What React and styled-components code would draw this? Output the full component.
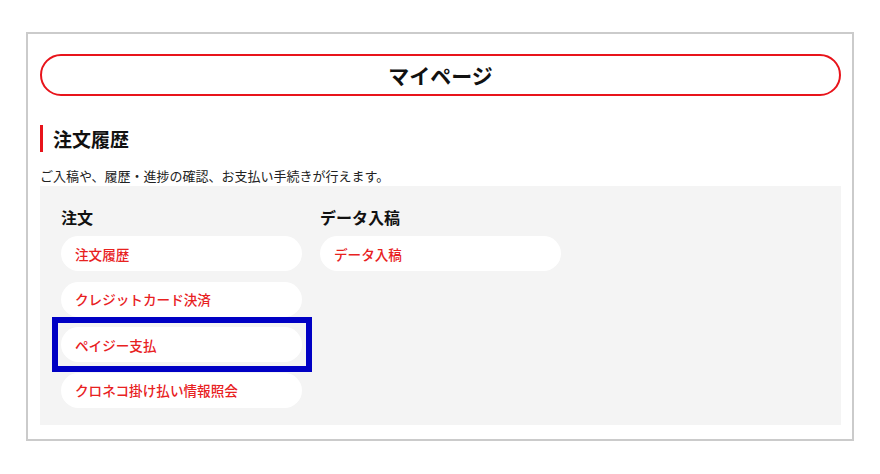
import styled, { createGlobalStyle } from 'styled-components'

const GlobalStyle = createGlobalStyle`
    body {
        margin:0;
        background:#fff;
        font-family:"Noto Sans CJK JP", "Noto Sans", sans-serif;
        color:#222;
    }
`;

const Frame = styled.div`
    margin:32px 0 0 26px;
    width:828px;
    height:409px;
    box-sizing:border-box;
    border:2px solid #cbcbcb;
    padding:20px 11px 0 12px;
`;

const PageTitle = styled.h1`
    margin:0;
    height:42px;
    box-sizing:border-box;
    border:2px solid #e8141b;
    border-radius:21px;
    display:flex;
    align-items:center;
    justify-content:center;
    font-size:21px;
    font-weight:700;
    color:#111;
`;

const SectionHeading = styled.h2`
    margin:29px 0 0 0;
    padding:0 0 0 10px;
    border-left:3px solid #e8141b;
    height:27px;
    display:flex;
    align-items:center;
    font-size:19px;
    font-weight:700;
    color:#111;
`;

const Lead = styled.p`
    margin:13px 0 0 0;
    font-size:13px;
    line-height:21px;
    color:#222;
`;

const Panel = styled.div`
    background:#f4f4f4;
    height:239px;
    box-sizing:border-box;
    padding:20px 21px 0;
    display:flex;
    gap:18px;
`;

const Column = styled.div`
    width:241px;
    display:flex;
    flex-direction:column;
`;

const ColumnTitle = styled.h3`
    margin:0 0 7px 0;
    font-size:16px;
    line-height:23px;
    font-weight:700;
    color:#111;
`;

const LinkList = styled.ul`
    list-style:none;
    margin:0;
    padding:0;
    display:flex;
    flex-direction:column;
    gap:10.5px;
`;

const LinkItem = styled.li`
    position:relative;
    ${p => p.$marked && `
        &::after {
            content:"";
            position:absolute;
            left:-9px;
            right:-10px;
            top:-10.5px;
            bottom:-10px;
            border:6px solid #0000c4;
            pointer-events:none;
        }
    `}
`;

const LinkPill = styled.a`
    display:flex;
    align-items:center;
    height:35px;
    padding:0 14px;
    border-radius:18px;
    background:#fff;
    color:#e8221f;
    font-size:13.6px;
    font-weight:500;
    text-decoration:none;
`;

const menus = [
    { title: '注文', links: ['注文履歴', 'クレジットカード決済', 'ペイジー支払', 'クロネコ掛け払い情報照会'] },
    { title: 'データ入稿', links: ['データ入稿'] },
];

const App = () => {
    return (
        <>
            <GlobalStyle/>
            <Frame>
                <PageTitle>マイページ</PageTitle>
                <SectionHeading>注文履歴</SectionHeading>
                <Lead>ご入稿や、履歴・進捗の確認、お支払い手続きが行えます。</Lead>
                <Panel>
                    {menus.map(menu => (
                        <Column key={menu.title}>
                            <ColumnTitle>{menu.title}</ColumnTitle>
                            <LinkList>
                                {menu.links.map(label => (
                                    <LinkItem key={label} $marked={label === 'ペイジー支払'}>
                                        <LinkPill href="#">{label}</LinkPill>
                                    </LinkItem>
                                ))}
                            </LinkList>
                        </Column>
                    ))}
                </Panel>
            </Frame>
        </>
    );
}

export default App;
